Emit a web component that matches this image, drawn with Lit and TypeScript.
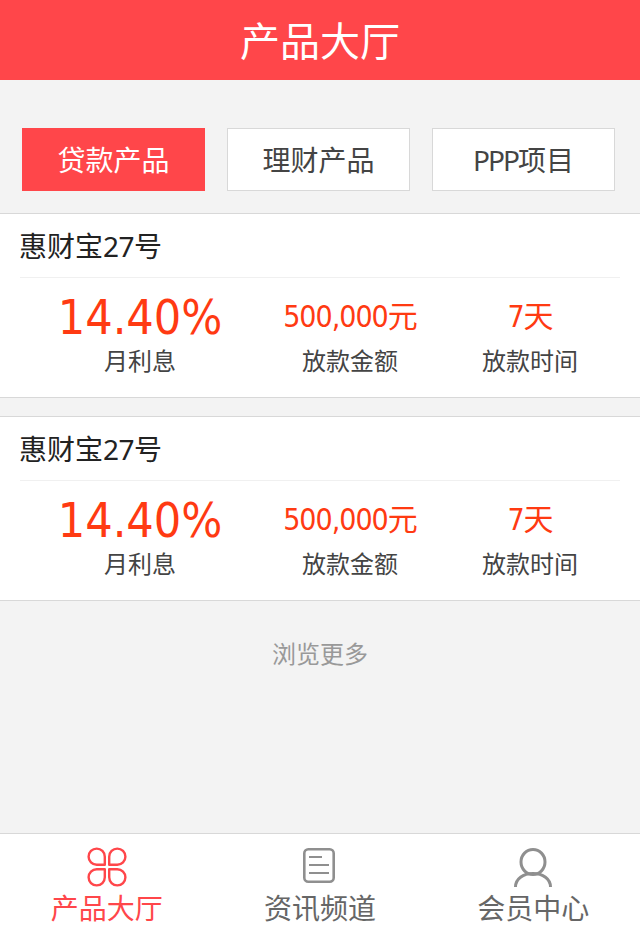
import { LitElement, html, css, svg } from "lit";
import { customElement } from "lit/decorators.js";

const petal = "M18.800 18.800H10.700A8.100 8.100 0 1 1 18.800 10.700Z";
const iconGrid = svg`<g fill="none" stroke="#ff464a" stroke-width="2.400" stroke-linejoin="round">
  <path d="${petal}"/>
  <path d="${petal}" transform="matrix(-1 0 0 1 42 0)"/>
  <path d="${petal}" transform="matrix(1 0 0 -1 0 42)"/>
  <path d="${petal}" transform="matrix(-1 0 0 -1 42 42)"/>
</g>`;
const iconDoc = svg`<g fill="none" stroke="#8f8f8f">
  <rect x="5.300" y="3.300" width="29.400" height="32.400" rx="4" stroke-width="2.600"/>
  <path d="M10 11h13M10 19h20M10 27h20" stroke-width="1.800"/>
</g>`;
const iconUser = svg`<g fill="none" stroke="#8f8f8f" stroke-width="3">
  <ellipse cx="21" cy="16" rx="12" ry="12.500"/>
  <path d="M3.500 41C3.500 33 11 27.500 21 27.500S38.500 33 38.500 41"/>
</g>`;

@customElement("app-root")
export class AppRoot extends LitElement {
  static styles = css`
    :host { display: flex; flex-direction: column; height: 931px; background: #f3f3f3; font-family: "Noto Sans", "Noto Sans CJK SC", sans-serif; color: #333; overflow: hidden; }
    .head { height: 80px; line-height: 82px; text-align: center; background: #ff464a; color: #fff; font-size: 40px; flex: none; }
    .tabs { display: flex; gap: 22px; padding: 48px 22px 22px; flex: none; }
    .tab { box-sizing: border-box; width: 183px; height: 63px; line-height: 63px; text-align: center; font-size: 28px; background: #fff; border: 1px solid #d8d8d8; color: #444; }
    .tab.on { background: #ff464a; border-color: #ff464a; color: #fff; }
    .tight { letter-spacing: -2px; }
    .list { display: flex; flex-direction: column; gap: 18px; flex: none; }
    .card { box-sizing: border-box; height: 185px; background: #fff; border-top: 1px solid #d8d8d8; border-bottom: 1px solid #d8d8d8; padding: 0 20px; }
    .title { height: 63px; line-height: 64px; font-size: 28px; color: #222; border-bottom: 1px solid #f0f0f0; text-indent: -1px; }
    .num { letter-spacing: -0.5px; }
    .stats { display: grid; grid-template-columns: 40% 30% 30%; }
    .stat { display: flex; flex-direction: column; align-items: center; padding-top: 6px; }
    .val { height: 66px; line-height: 66px; color: #ff3a12; font-size: 30px; white-space: nowrap; font-family: "DejaVu Sans Condensed", "Noto Sans CJK SC", sans-serif; letter-spacing: -1px; }
    .val.big { font-size: 48px; letter-spacing: 0; }
    .lab { line-height: 22px; font-size: 24px; color: #444; }
    .more { text-align: center; font-size: 24px; color: #999; line-height: 34px; padding-top: 36px; flex: none; }
    .nav { margin-top: auto; box-sizing: border-box; height: 98px; flex: none; display: grid; grid-template-columns: repeat(3, 1fr); background: #fff; border-top: 1px solid #d8d8d8; }
    .item { display: flex; flex-direction: column; align-items: center; font-size: 28px; color: #666; }
    .item.on { color: #ff464a; }
    .ic { width: 42px; height: 42px; margin-top: 12px; display: block; }
    .txt { line-height: 40px; }
  `;

  card() {
    return html`<div class="card">
      <div class="title">惠财宝<span class="num">27</span>号</div>
      <div class="stats">
        <div class="stat"><div class="val big">14.40%</div><div class="lab">月利息</div></div>
        <div class="stat"><div class="val">500,000元</div><div class="lab">放款金额</div></div>
        <div class="stat"><div class="val">7天</div><div class="lab">放款时间</div></div>
      </div>
    </div>`;
  }

  render() {
    return html`
      <div class="head">产品大厅</div>
      <div class="tabs">
        <div class="tab on">贷款产品</div>
        <div class="tab">理财产品</div>
        <div class="tab"><span class="tight">PPP</span>项目</div>
      </div>
      <div class="list">${this.card()}${this.card()}</div>
      <div class="more">浏览更多</div>
      <div class="nav">
        <div class="item on"><svg class="ic" viewBox="0 0 42 42">${iconGrid}</svg><div class="txt">产品大厅</div></div>
        <div class="item"><svg class="ic" viewBox="0 0 42 42">${iconDoc}</svg><div class="txt">资讯频道</div></div>
        <div class="item"><svg class="ic" viewBox="0 0 42 42">${iconUser}</svg><div class="txt">会员中心</div></div>
      </div>
    `;
  }
}
